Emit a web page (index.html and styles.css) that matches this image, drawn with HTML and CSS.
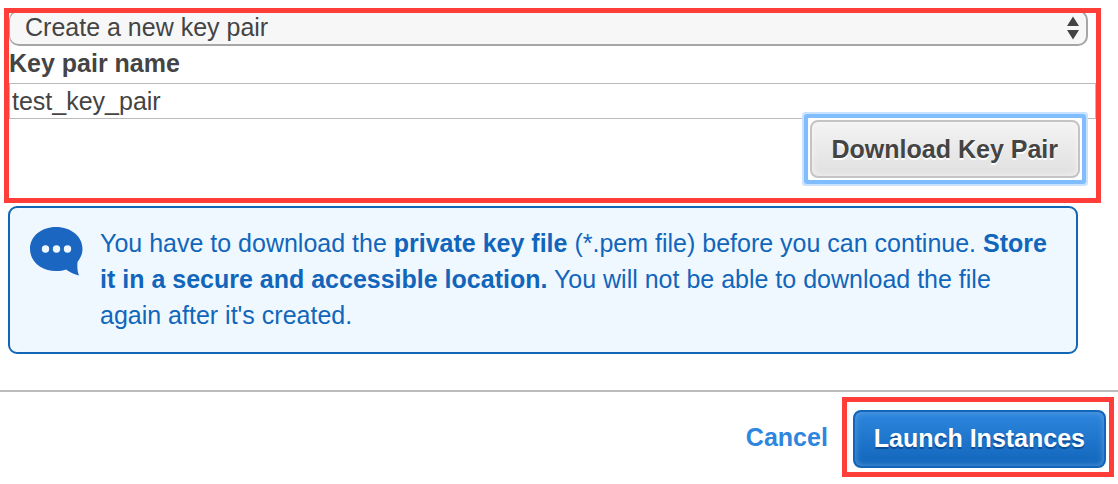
FILE: index.html
```html
<!DOCTYPE html>
<html lang="en">
<head>
<meta charset="utf-8">
<meta name="viewport" content="width=device-width, initial-scale=1">
<title>Key pair</title>
<link rel="stylesheet" href="styles.css">
</head>
<body>
<form class="dialog">
  <section class="highlight key-form">
    <div class="select-wrap">
      <select class="select" aria-label="Key pair option">
        <option>Create a new key pair</option>
      </select>
      <svg class="select-arrows" width="12" height="24" viewBox="0 0 12 24" aria-hidden="true">
        <path d="M6 0.5 12 10H0ZM0 14H12L6 23.5Z" fill="#444"/>
      </svg>
    </div>
    <label class="label" for="key-name">Key pair name</label>
    <input class="text-input" id="key-name" type="text" value="test_key_pair">
    <div class="focus-ring">
      <button class="button button-download" type="button">Download Key Pair</button>
    </div>
  </section>

  <div class="notice">
    <svg class="notice-icon" width="54" height="51" viewBox="0 -1 54 51" aria-hidden="true">
      <path d="M27 1C12 1 1 10.500 1 23S12 45 27 45C31 45 34 44.500 37 43.500C41 46.500 45.500 48.500 50 49.500C48.500 45.500 48 41 48.500 36C51.500 32 53.500 28 53.500 23C53.500 10.500 42 1 27 1Z" fill="#1a66c0"/>
      <circle cx="16.500" cy="23" r="3.700" fill="#f0f8ff"/>
      <circle cx="27.500" cy="23" r="3.700" fill="#f0f8ff"/>
      <circle cx="38.500" cy="23" r="3.700" fill="#f0f8ff"/>
    </svg>
    <p class="notice-text">You have to download the <strong>private key file</strong> (*.pem file) before you can continue. <strong>Store it in a secure and accessible location.</strong> You will not be able to download the file again after it's created.</p>
  </div>

  <footer class="actions">
    <a class="cancel" href="#">Cancel</a>
    <div class="highlight launch-frame">
      <button class="button button-primary" type="submit">Launch Instances</button>
    </div>
  </footer>
</form>
</body>
</html>
```
FILE: styles.css
```css
* {
  box-sizing: border-box;
}

body {
  margin: 0;
  background: #fff;
  color: #444;
  font: 25px/36px "Liberation Sans", Arial, sans-serif;
}

.dialog {
  padding-top: 8px;
}

.highlight {
  border: 5px solid #ff3e3a;
}

.key-form {
  display: flex;
  flex-direction: column;
  margin: 0 17px 0 4px;
  padding-bottom: 18px;
  overflow: hidden;
}

.select-wrap {
  display: grid;
  align-items: center;
  margin: -3px 8px 0 0;
}

.select,
.select-arrows {
  grid-area: 1 / 1;
}

.select {
  appearance: none;
  width: 100%;
  height: 36px;
  padding: 0 40px 2px 15px;
  border: 2px solid #a6a6a6;
  border-left-width: 1px;
  border-radius: 10px;
  background: #f7f7f7;
  color: inherit;
  font: inherit;
  line-height: 30px;
}

.select-arrows {
  justify-self: end;
  margin-right: 9px;
  pointer-events: none;
}

.label {
  height: 37px;
  line-height: 34px;
  font-weight: bold;
}

.text-input {
  width: 100%;
  height: 36px;
  padding: 0 2px;
  border: 1px solid #bbb;
  background: #fff;
  color: inherit;
  font: inherit;
}

.focus-ring {
  display: flex;
  align-self: flex-end;
  margin: -1px 14px 0 0;
  padding: 2px;
  background: #fff;
  box-shadow: 0 0 0 4px #80bdff, 0 0 0 6px #c9e2ff;
  border-radius: 1px;
}

.button {
  height: 58px;
  padding: 0 19px 3px;
  border-radius: 8px;
  font: bold 25px/36px "Liberation Sans", Arial, sans-serif;
}

.button-download {
  padding: 0 20px;
  border: 2px solid #c4c4c4;
  background: linear-gradient(#f3f3f3, #e0e0e0);
  color: #444;
  text-shadow: 0 2px 0 #fff;
  box-shadow: inset 0 0 6px #f7f7f7;
}

.notice {
  display: flex;
  gap: 17px;
  margin: 3px 40px 0 8px;
  padding: 17px 20px 19px 19px;
  border: 2px solid #1166b5;
  border-radius: 9px;
  background: #f0f8ff;
  color: #1166bb;
}

.notice-icon {
  flex: none;
}

.notice-text {
  margin: 0;
}

.actions {
  display: flex;
  align-items: center;
  justify-content: flex-end;
  gap: 14px;
  margin-top: 36px;
  padding: 5px 4px 0 0;
  border-top: 2px solid #bbb;
}

.cancel {
  color: #2e86de;
  font-weight: bold;
  text-decoration: none;
}

.launch-frame {
  display: flex;
  padding: 8px 3px 4px 6px;
}

.button-primary {
  border: 2px solid #1166bb;
  background: linear-gradient(#2e86de, #1166bb);
  color: #fff;
  text-shadow: 0 2px 1px #0d4c92;
  box-shadow: inset 0 0 6px #609fdc;
}
```
